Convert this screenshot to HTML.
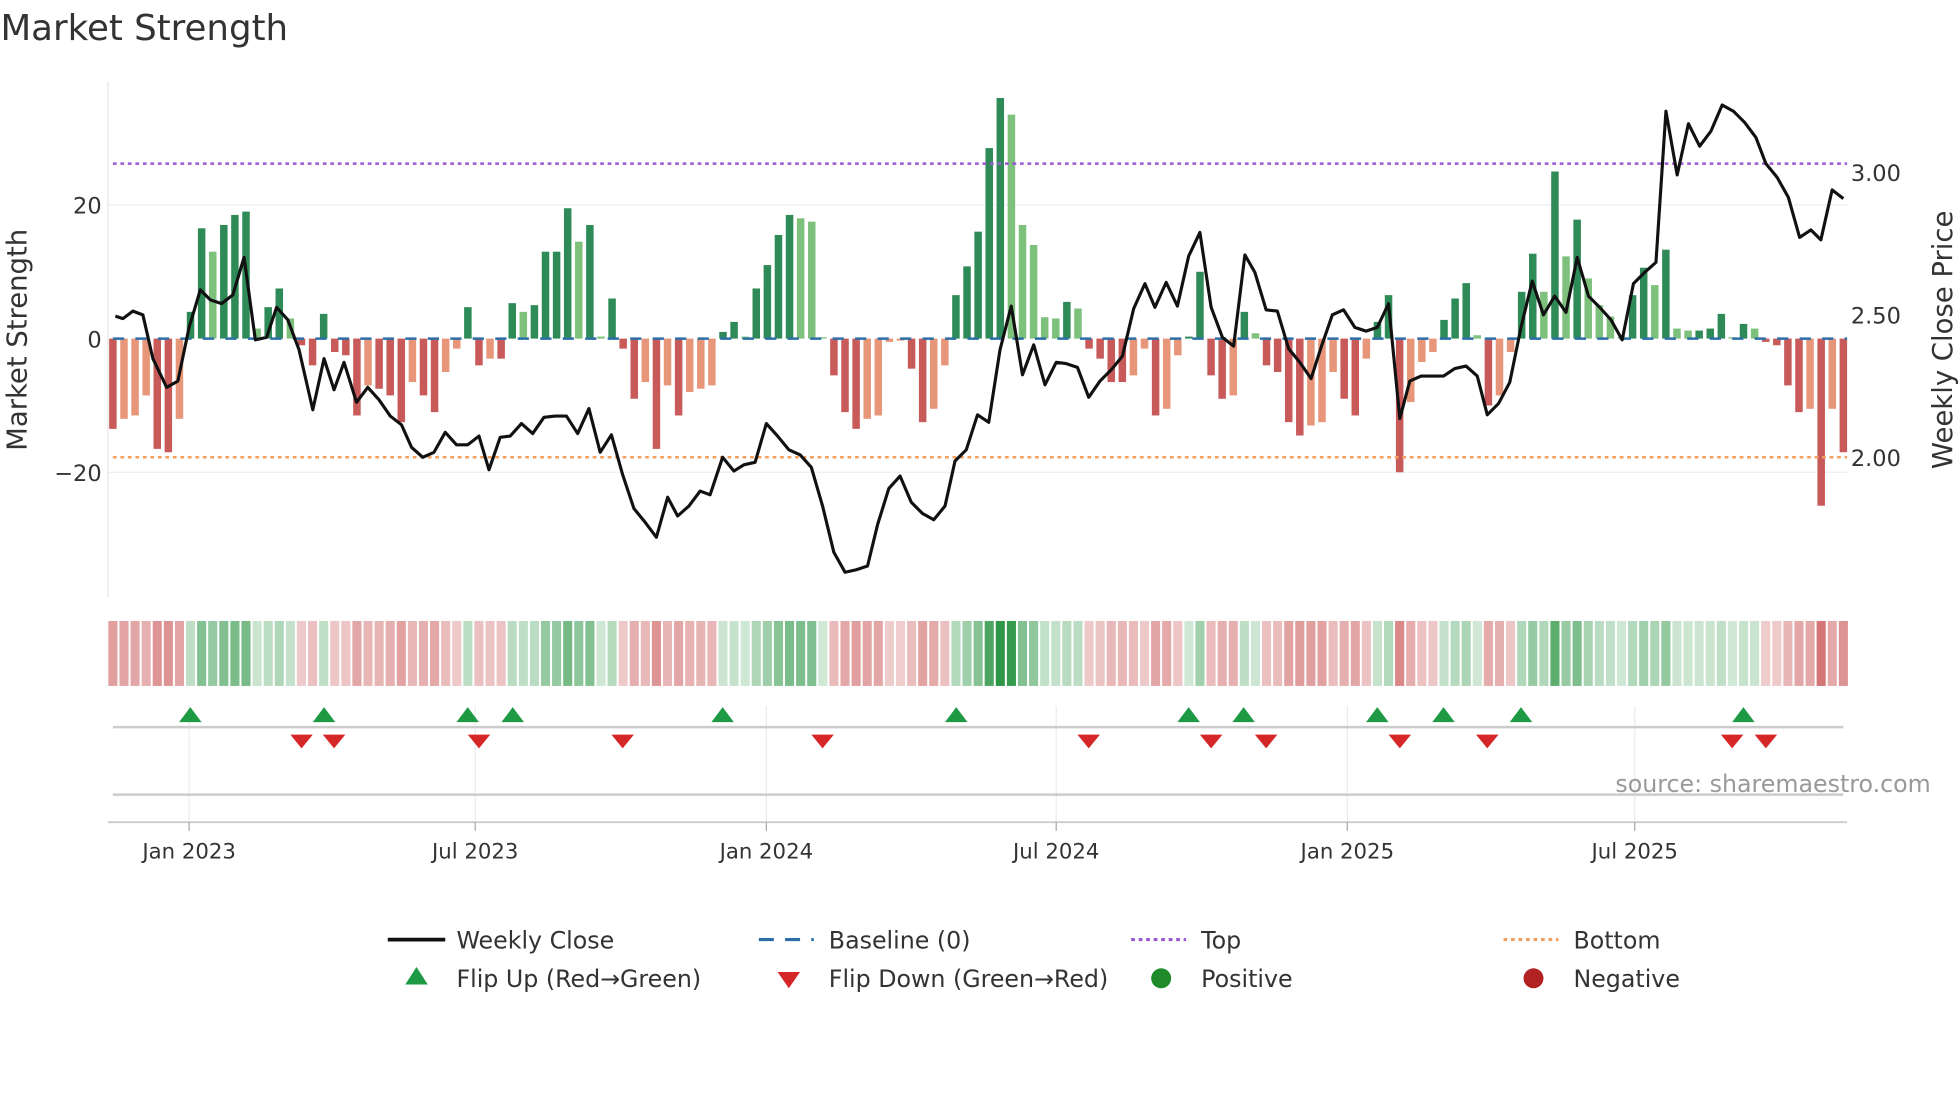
<!DOCTYPE html>
<html><head><meta charset="utf-8"><style>
html,body{margin:0;padding:0;background:#fff;}
svg{display:block;font-family:"DejaVu Sans","Liberation Sans",sans-serif;}
</style></head><body>
<svg id="s" width="1960" height="1102" viewBox="0 0 1568 882" xmlns="http://www.w3.org/2000/svg">
<rect width="1568" height="882" fill="#fff"/>
<text x="0" y="32" font-size="28.5" fill="#333">Market Strength</text>
<line x1="86" y1="65" x2="86" y2="478" stroke="#e6e6e6"/>
<line x1="86" y1="164" x2="1478" y2="164" stroke="#eceff2"/>
<line x1="86" y1="378" x2="1478" y2="378" stroke="#eceff2"/>
<g id="bars"></g>
<line x1="90" y1="271" x2="1478" y2="271" stroke="#2c6fa8" stroke-width="2" stroke-dasharray="9,9"/>
<line x1="90" y1="131" x2="1478" y2="131" stroke="#9b59d6" stroke-width="2" stroke-dasharray="3,3"/>
<line x1="90" y1="366" x2="1478" y2="366" stroke="#f0a060" stroke-width="2" stroke-dasharray="3,3"/>
<polyline id="price" fill="none" stroke="#111" stroke-width="2.5" stroke-linejoin="round"/>
<g font-size="18" fill="#333">
<text x="81" y="171" text-anchor="end">20</text>
<text x="81" y="278" text-anchor="end">0</text>
<text x="81" y="385" text-anchor="end">−20</text>
<text x="1481" y="145">3.00</text>
<text x="1481" y="259">2.50</text>
<text x="1481" y="373">2.00</text>
</g>
<text transform="translate(21,272) rotate(-90)" font-size="22" fill="#333" text-anchor="middle">Market Strength</text>
<text transform="translate(1562,272) rotate(-90)" font-size="22" fill="#333" text-anchor="middle">Weekly Close Price</text>
<g id="heat"></g>
<g stroke="#ececec">
<line x1="151" y1="565" x2="151" y2="658"/><line x1="380" y1="565" x2="380" y2="658"/>
<line x1="613" y1="565" x2="613" y2="658"/><line x1="845" y1="565" x2="845" y2="658"/>
<line x1="1078" y1="565" x2="1078" y2="658"/><line x1="1308" y1="565" x2="1308" y2="658"/>
</g>
<line x1="90" y1="582" x2="1475" y2="582" stroke="#ccc" stroke-width="2"/>
<line x1="90" y1="636" x2="1475" y2="636" stroke="#ccc" stroke-width="2"/>
<line x1="86" y1="658" x2="1478" y2="658" stroke="#ccc" stroke-width="1.5"/>
<g stroke="#aaa">
<line x1="151" y1="658" x2="151" y2="665"/><line x1="380" y1="658" x2="380" y2="665"/>
<line x1="613" y1="658" x2="613" y2="665"/><line x1="845" y1="658" x2="845" y2="665"/>
<line x1="1078" y1="658" x2="1078" y2="665"/><line x1="1308" y1="658" x2="1308" y2="665"/>
</g>
<g id="marks"></g>
<text x="1545" y="634" font-size="19" fill="#999" text-anchor="end">source: sharemaestro.com</text>
<g font-size="17" fill="#333" text-anchor="middle">
<text x="151" y="687">Jan 2023</text><text x="380" y="687">Jul 2023</text>
<text x="613" y="687">Jan 2024</text><text x="845" y="687">Jul 2024</text>
<text x="1078" y="687">Jan 2025</text><text x="1308" y="687">Jul 2025</text>
</g>
<g font-size="19" fill="#333">
<line x1="310" y1="752" x2="356" y2="752" stroke="#111" stroke-width="3"/>
<text x="365" y="759">Weekly Close</text>
<line x1="607" y1="752" x2="651" y2="752" stroke="#2c6fa8" stroke-width="2.5" stroke-dasharray="12,9"/>
<text x="663" y="759">Baseline (0)</text>
<line x1="905" y1="752" x2="949" y2="752" stroke="#9b59d6" stroke-width="2.5" stroke-dasharray="3,3"/>
<text x="961" y="759">Top</text>
<line x1="1203" y1="752" x2="1247" y2="752" stroke="#f0a060" stroke-width="2.5" stroke-dasharray="3,3"/>
<text x="1259" y="759">Bottom</text>
<polygon points="333,774 342,788 324,788" fill="#1e9a45"/>
<text x="365" y="790">Flip Up (Red→Green)</text>
<polygon points="622,778 640,778 631,791" fill="#d62728"/>
<text x="663" y="790">Flip Down (Green→Red)</text>
<circle cx="929" cy="783" r="8" fill="#1f8a2a"/>
<text x="961" y="790">Positive</text>
<circle cx="1227" cy="783" r="8" fill="#b22222"/>
<text x="1259" y="790">Negative</text>
</g>
</svg>
<script>
var NS="http://www.w3.org/2000/svg";
function el(t,a,p){var e=document.createElementNS(NS,t);for(var k in a)e.setAttribute(k,a[k]);p.appendChild(e);return e;}
var v=[-13.5,-12,-11.5,-8.5,-16.5,-17,-12,4,16.5,13,17,18.5,19,1.5,4.7,7.5,3,-1,-4,3.7,-2,-2.5,-11.5,-7,-7.5,-8.5,-12.5,-6.5,-8.5,-11,-5,-1.5,4.7,-4,-3,-3,5.3,4,5,13,13,19.5,14.5,17,0.3,6,-1.5,-9,-6.5,-16.5,-7,-11.5,-8,-7.5,-7,1,2.5,0.3,7.5,11,15.5,18.5,18,17.5,0.2,-5.5,-11,-13.5,-12,-11.5,-0.5,-0.3,-4.5,-12.5,-10.5,-4,6.5,10.8,16,28.5,36,33.5,17,14,3.2,3,5.5,4.5,-1.5,-3,-6.5,-6.5,-5.5,-1.5,-11.5,-10.5,-2.5,0.3,10,-5.5,-9,-8.5,4,0.8,-4,-5,-12.5,-14.5,-13,-12.5,-5,-9,-11.5,-3,2.5,6.5,-20,-9.5,-3.5,-2,2.8,6,8.3,0.5,-10,-8.5,-2,7,12.7,7,25,12.3,17.8,9,5,3.3,0.3,6.5,10.6,8,13.3,1.5,1.2,1.2,1.5,3.7,0.2,2.2,1.5,-0.5,-1,-7,-11,-10.5,-25,-10.5,-17];
var n=v.length,x0=90,x1=1475,dx=(x1-x0)/(n-1);
var bars=document.getElementById("bars"),heat=document.getElementById("heat");
for(var i=0;i<n;i++){
 var x=x0+i*dx,val=v[i],prev=i?v[i-1]:0,strong=Math.abs(val)>=Math.abs(prev)||(val*prev<0);
 var c=val>=0?(strong?"#2e8b57":"#7dc17c"):(strong?"#c85a5a":"#e8967a");
 var h=Math.abs(val)*5.35,y=val>=0?271-h:271;
 el("rect",{x:x-3,y:y,width:6,height:Math.max(h,0.5),fill:c},bars);
 var hc=val>=0?"rgba(46,150,70,"+(0.22+Math.min(Math.abs(val),36)/45)+")":"rgba(200,80,80,"+(0.28+Math.min(Math.abs(val),25)/50)+")";
 el("rect",{x:x-dx/2+0.8,y:497,width:dx-1.6,height:52,fill:hc},heat);
}
var p=[[92,253],[98,255],[106,249],[114,252],[122,287],[133,310],[142,305],[151,262],[160,232],[168,240],[177,243],[186,236],[195,206],[204,272],[213,270],[221,246],[230,256],[239,280],[250,328],[259,287],[267,312],[275,290],[285,322],[294,310],[303,320],[312,333],[321,340],[329,358],[338,366],[347,362],[356,346],[365,356],[374,356],[383,349],[391,376],[400,350],[408,349],[417,339],[426,347],[435,334],[444,333],[453,333],[462,347],[471,327],[480,362],[489,348],[498,380],[507,407],[516,418],[525,430],[534,398],[542,413],[551,405],[560,393],[568,396],[578,366],[587,377],[595,372],[604,370],[613,339],[622,349],[631,360],[640,364],[649,374],[658,405],[667,442],[676,458],[685,456],[694,453],[702,420],[711,391],[720,381],[729,402],[738,411],[747,416],[756,405],[764,369],[773,360],[782,332],[791,338],[800,280],[809,245],[818,300],[827,276],[836,308],[845,290],[853,291],[862,294],[871,318],[880,305],[889,296],[898,285],[907,247],[916,227],[924,246],[933,226],[942,245],[951,205],[960,186],[969,246],[978,270],[987,277],[996,204],[1004,218],[1013,248],[1022,249],[1031,279],[1040,290],[1049,303],[1057,278],[1066,252],[1075,248],[1084,262],[1093,265],[1102,262],[1111,243],[1120,335],[1128,305],[1137,301],[1146,301],[1155,301],[1164,295],[1173,293],[1182,301],[1190,332],[1199,323],[1208,306],[1217,262],[1226,225],[1235,252],[1244,237],[1253,250],[1262,206],[1271,237],[1280,246],[1289,256],[1298,272],[1307,227],[1316,218],[1325,210],[1333,89],[1342,140],[1351,99],[1360,117],[1369,105],[1378,84],[1387,89],[1396,98],[1405,110],[1413,131],[1422,142],[1431,158],[1440,190],[1449,184],[1457,192],[1466,152],[1475,159]];
document.getElementById("price").setAttribute("points",p.map(function(q){return q.join(",")}).join(" "));
var m=document.getElementById("marks");
[152,259,374,410,578,765,951,995,1102,1155,1217,1395].forEach(function(x){el("polygon",{points:x+",566 "+(x+9)+",578 "+(x-9)+",578",fill:"#1e9a45"},m);});
[241,267,383,498,658,871,969,1013,1120,1190,1386,1413].forEach(function(x){el("polygon",{points:(x-9)+",588 "+(x+9)+",588 "+x+",599",fill:"#d62728"},m);});
</script>
</body></html>
